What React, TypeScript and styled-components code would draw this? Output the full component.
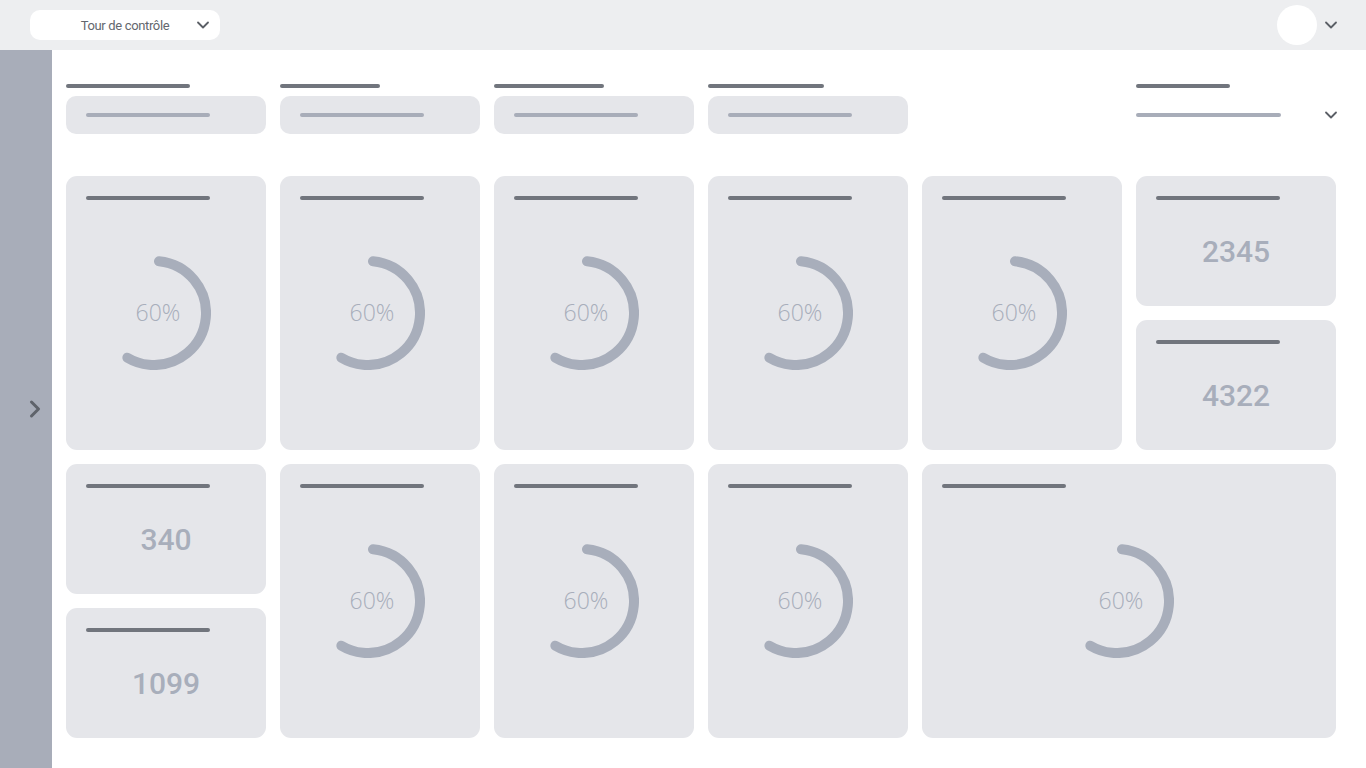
import React from "react";
import styled, { createGlobalStyle } from "styled-components";
import { ChevronDown, ChevronRight } from "lucide-react";

const GlobalStyle = createGlobalStyle`
  html, body { margin: 0; padding: 0; }
  body { font-family: Roboto, "Liberation Sans", sans-serif; background: #ffffff; }
  * { box-sizing: border-box; }
`;

const Page = styled.div`
  display: flex;
  flex-direction: column;
  width: 100%;
  height: 100vh;
  overflow: hidden;
`;

const TopBar = styled.header`
  height: 50px;
  flex: 0 0 50px;
  background: #edeef0;
  display: flex;
  align-items: center;
  justify-content: space-between;
  padding: 0 25px 0 30px;
`;

const Select = styled.div`
  width: 190px;
  height: 30px;
  background: #ffffff;
  border-radius: 10px;
  display: grid;
  grid-template-columns: 1fr auto 1fr;
  align-items: center;
  padding: 0 7px;
  color: #63676e;
  font-size: 13px;
  letter-spacing: -0.35px;
`;

const SelectText = styled.span`
  grid-column: 2;
  white-space: nowrap;
`;

const SelectIcon = styled.span`
  grid-column: 3;
  justify-self: end;
  display: flex;
  color: #5b5f66;
`;

const UserArea = styled.div`
  display: flex;
  align-items: center;
  gap: 4px;
  color: #5b5f66;
`;

const Avatar = styled.div`
  width: 40px;
  height: 40px;
  border-radius: 50%;
  background: #ffffff;
`;

const Body = styled.div`
  flex: 1;
  display: flex;
  min-height: 0;
`;

const Sidebar = styled.aside`
  width: 52px;
  flex: 0 0 52px;
  background: #a8adb9;
  display: flex;
  align-items: center;
  justify-content: center;
  padding-left: 18px;
  color: #5f636b;
`;

const Main = styled.main`
  flex: 1;
  background: #ffffff;
  padding: 34px 30px 0 14px;
  display: flex;
  flex-direction: column;
  gap: 42px;
`;

const Grid6 = styled.div`
  display: grid;
  grid-template-columns: repeat(6, 200px);
  column-gap: 14px;
`;

const Filter = styled.div<{ $col?: number }>`
  display: flex;
  flex-direction: column;
  gap: 8px;
  grid-column: ${(p) => p.$col ?? "auto"};
`;

const Bar = styled.div<{ $w: number; $tone?: "dark" | "light" }>`
  width: ${(p) => p.$w}px;
  height: 4px;
  border-radius: 2px;
  background: ${(p) => (p.$tone === "light" ? "#a8adb9" : "#71757d")};
  flex: 0 0 auto;
`;

const Input = styled.div`
  height: 38px;
  border-radius: 10px;
  background: #e5e6ea;
  display: flex;
  align-items: center;
  padding-left: 20px;
`;

const PlainSelect = styled.div`
  height: 38px;
  display: flex;
  align-items: center;
  justify-content: space-between;
  color: #5b5f66;
  & > svg {
    margin-right: -5px;
  }
`;

const Cards = styled.div`
  display: grid;
  grid-template-columns: repeat(6, 200px);
  grid-template-rows: repeat(4, 130px);
  gap: 14px;
`;

const Card = styled.section<{ $col: string; $row: string; $bottom?: number }>`
  grid-column: ${(p) => p.$col};
  grid-row: ${(p) => p.$row};
  background: #e5e6ea;
  border-radius: 11px;
  padding: 20px 20px ${(p) => p.$bottom ?? 24}px;
  display: flex;
  flex-direction: column;
`;

const ChartArea = styled.div`
  flex: 1;
  display: flex;
  align-items: center;
  justify-content: center;
  margin-right: 25px;
`;

const Donut = styled.div`
  display: grid;
  place-items: center;
  & > * {
    grid-area: 1 / 1;
  }
`;

const DonutLabel = styled.span`
  font-family: "Open Sans", "Noto Sans", sans-serif;
  font-size: 23px;
  font-weight: 300;
  color: #a8aebb;
  margin-left: 9px;
  margin-top: -2px;
`;

const NumberArea = styled.div`
  flex: 1;
  display: flex;
  align-items: center;
  justify-content: center;
`;

const BigNumber = styled.span`
  font-family: Roboto, "Liberation Sans", sans-serif;
  font-size: 30px;
  font-weight: 500;
  color: #a8aebb;
`;

const R = 52;
const C = 2 * Math.PI * R;
const START = 5.5;
const END = 210.5;

function Ring({ value }: { value: number }) {
  const span = END - START;
  return (
    <Donut>
      <svg width="114" height="114" viewBox="0 0 114 114">
        <circle
          cx="57"
          cy="57"
          r={R}
          fill="none"
          stroke="#a8aebb"
          strokeWidth="10"
          strokeLinecap="round"
          strokeDasharray={`${(C * span) / 360} ${C}`}
          transform={`rotate(${-90 + START} 57 57)`}
        />
      </svg>
      <DonutLabel>{value}%</DonutLabel>
    </Donut>
  );
}

function DonutCard({ col, row }: { col: string; row: string }) {
  return (
    <Card $col={col} $row={row}>
      <Bar $w={124} />
      <ChartArea>
        <Ring value={60} />
      </ChartArea>
    </Card>
  );
}

function NumberCard({ col, row, value }: { col: string; row: string; value: string }) {
  return (
    <Card $col={col} $row={row} $bottom={4}>
      <Bar $w={124} />
      <NumberArea>
        <BigNumber>{value}</BigNumber>
      </NumberArea>
    </Card>
  );
}

const filterWidths = [124, 100, 110, 116];

export default function App() {
  return (
    <>
      <GlobalStyle />
      <Page>
        <TopBar>
          <Select>
            <SelectText>Tour de contrôle</SelectText>
            <SelectIcon>
              <ChevronDown size={20} strokeWidth={2.2} />
            </SelectIcon>
          </Select>
          <UserArea>
            <Avatar />
            <ChevronDown size={20} strokeWidth={2.2} />
          </UserArea>
        </TopBar>
        <Body>
          <Sidebar>
            <ChevronRight size={28} strokeWidth={2.6} />
          </Sidebar>
          <Main>
            <Grid6>
              {filterWidths.map((w, i) => (
                <Filter key={i}>
                  <Bar $w={w} />
                  <Input>
                    <Bar $w={124} $tone="light" />
                  </Input>
                </Filter>
              ))}
              <Filter $col={6}>
                <Bar $w={94} />
                <PlainSelect>
                  <Bar $w={145} $tone="light" />
                  <ChevronDown size={20} strokeWidth={2.2} />
                </PlainSelect>
              </Filter>
            </Grid6>
            <Cards>
              <DonutCard col="1" row="1 / span 2" />
              <DonutCard col="2" row="1 / span 2" />
              <DonutCard col="3" row="1 / span 2" />
              <DonutCard col="4" row="1 / span 2" />
              <DonutCard col="5" row="1 / span 2" />
              <NumberCard col="6" row="1" value="2345" />
              <NumberCard col="6" row="2" value="4322" />
              <NumberCard col="1" row="3" value="340" />
              <NumberCard col="1" row="4" value="1099" />
              <DonutCard col="2" row="3 / span 2" />
              <DonutCard col="3" row="3 / span 2" />
              <DonutCard col="4" row="3 / span 2" />
              <DonutCard col="5 / span 2" row="3 / span 2" />
            </Cards>
          </Main>
        </Body>
      </Page>
    </>
  );
}
